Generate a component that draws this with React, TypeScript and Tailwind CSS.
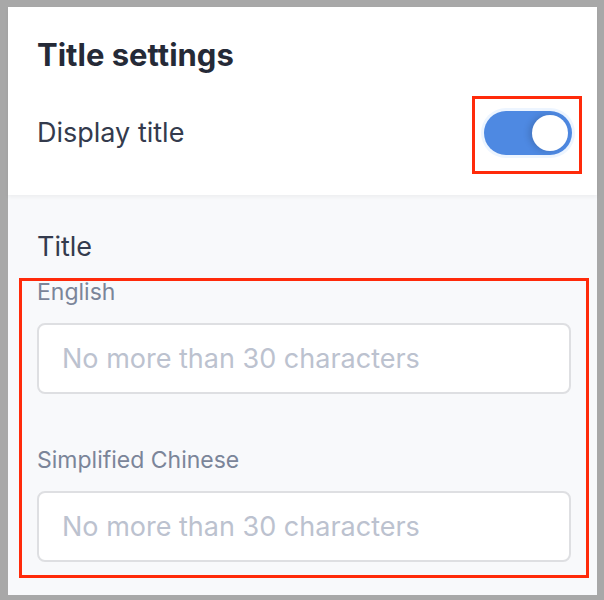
import React, { useState } from 'react';

const Toggle: React.FC<{ on: boolean; onChange: () => void }> = ({ on, onChange }) => (
  <button
    onClick={onChange}
    className={`relative h-[44px] w-[88px] rounded-full p-[4px] ring-[3px] ring-[#edf5ff] flex items-center ${
      on ? 'bg-[#4e89e2] justify-end' : 'bg-gray-300 justify-start'
    }`}
  >
    <span className="block h-[36px] w-[36px] rounded-full bg-white shadow-[-3px_0_6px_rgba(0,0,0,0.15)]" />
  </button>
);

export default function App() {
  const [show, setShow] = useState(true);
  const [en, setEn] = useState('');
  const [zh, setZh] = useState('');

  return (
    <div className="relative w-[604px] h-[600px] bg-[#a8a8a8] pt-[7px] pl-[8px] pr-[7px] pb-[5px] font-['Inter','Noto_Sans',sans-serif]">
      <div className="h-full flex flex-col bg-[#f8f9fb]">
        <div className="bg-white pl-[29px] pr-[25px] pt-[30px] h-[188px] shadow-[0_2px_4px_rgba(0,0,0,0.05)] relative z-10">
          <h2 className="text-[31px] leading-[36px] font-bold text-[#252a37]">Title settings</h2>
          <div className="mt-[38px] flex items-center justify-between">
            <span className="text-[27px] leading-[44px] text-[#343b4d]">Display title</span>
            <Toggle on={show} onChange={() => setShow(!show)} />
          </div>
        </div>

        <div className="pl-[29px] pr-[26px] pt-[36px]">
          <div className="text-[27px] leading-[32px] text-[#343b4d]">Title</div>
          <label className="block mt-[15px] text-[23px] leading-[28px] text-[#7b8599]">English</label>
          <input
            value={en}
            onChange={(e) => setEn(e.target.value)}
            placeholder="No more than 30 characters"
            className="mt-[17px] w-full h-[71px] rounded-[8px] border-2 border-[#dedfe2] bg-white px-[23px] text-[27px] text-[#343b4d] placeholder:text-[#bcc2cf] outline-none"
          />
          <label className="block mt-[52px] text-[23px] leading-[28px] text-[#7b8599]">Simplified Chinese</label>
          <input
            value={zh}
            onChange={(e) => setZh(e.target.value)}
            placeholder="No more than 30 characters"
            className="mt-[17px] w-full h-[71px] rounded-[8px] border-2 border-[#dedfe2] bg-white px-[23px] text-[27px] text-[#343b4d] placeholder:text-[#bcc2cf] outline-none"
          />
        </div>
      </div>

      {/* annotation boxes */}
      <div className="absolute left-[472px] top-[96px] w-[110px] h-[78px] border-[3px] border-[#ff2a0a] pointer-events-none z-20" />
      <div className="absolute left-[19px] top-[278px] w-[570px] h-[300px] border-[3px] border-[#ff2a0a] pointer-events-none z-20" />
    </div>
  );
}
